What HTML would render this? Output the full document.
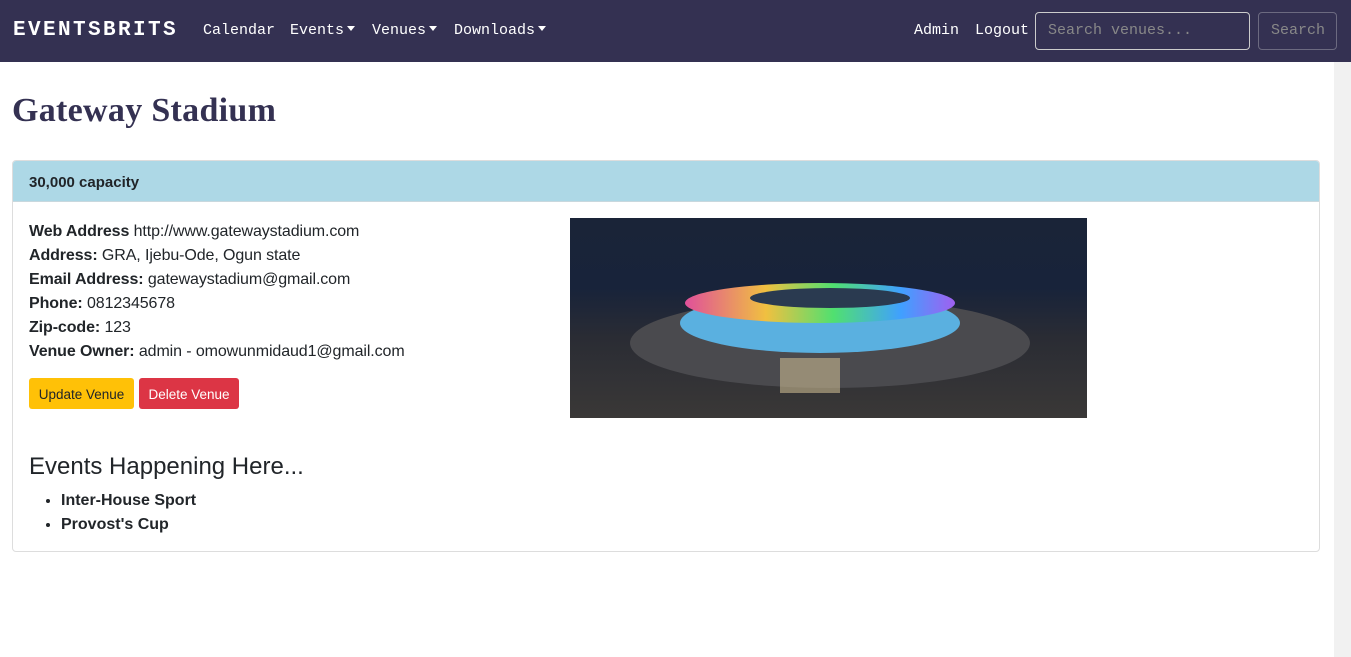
<!DOCTYPE html>
<html><head><style>
*{box-sizing:border-box;margin:0;padding:0}
body{width:1351px;height:657px;overflow:hidden;background:#fff;font-family:"Liberation Sans",sans-serif;color:#212529;position:relative}
nav{position:absolute;left:0;top:0;width:1351px;height:62px;background:#343152;color:#fff;font-family:"Liberation Mono",monospace}
.brand{position:absolute;left:13px;top:19px;font-size:21px;font-weight:bold;letter-spacing:2.4px}
.nl{position:absolute;top:22px;font-size:15px}
.car{display:inline-block;width:0;height:0;border-left:4.5px solid transparent;border-right:4.5px solid transparent;border-top:5px solid #fff;vertical-align:3px;margin-left:3px}
.inp{position:absolute;left:1035px;top:12px;width:215px;height:38px;border:1px solid #ccc;border-radius:4px;color:#888;font-size:15px;padding:9px 12px}
.btn{position:absolute;left:1258px;top:12px;width:79px;height:38px;border:1px solid #6c6a80;border-radius:4px;color:#888;font-size:15px;padding:9px 12px}
.sb{position:absolute;left:1334px;top:62px;width:17px;height:595px;background:#f1f1f1}
h1{position:absolute;left:12px;top:92px;font-family:"Liberation Serif",serif;font-size:34px;color:#343152;font-weight:bold;letter-spacing:0.3px}
.card{position:absolute;left:12px;top:160px;width:1308px;height:392px;border:1px solid #ddd;border-radius:4px;overflow:hidden}
.ch{height:41px;background:#add8e6;border-bottom:1px solid #c8d8de;font-weight:bold;font-size:15px;padding:13px 16px 0}
.info{position:absolute;left:16px;top:59px;font-size:16px;line-height:24px;letter-spacing:-0.1px}
.b{position:absolute;top:217px;height:31px;border-radius:3px;font-size:13.5px;padding:9px 9px 0;white-space:nowrap;text-align:center}
h3{position:absolute;left:16px;top:292px;font-size:24px;font-weight:normal}
ul{position:absolute;left:48px;top:328px;font-size:16px;font-weight:bold;line-height:24px}
.img{position:absolute;left:557px;top:57px;width:517px;height:200px;background:linear-gradient(#1a2438 0%,#18233a 35%,#2a2c34 60%,#3a3837 100%);overflow:hidden}
</style></head><body>
<nav>
<div class="brand">EVENTSBRITS</div>
<div class="nl" style="left:203px">Calendar</div>
<div class="nl" style="left:290px">Events<span class="car"></span></div>
<div class="nl" style="left:372px">Venues<span class="car"></span></div>
<div class="nl" style="left:454px">Downloads<span class="car"></span></div>
<div class="nl" style="left:914px">Admin</div>
<div class="nl" style="left:975px">Logout</div>
<div class="inp">Search venues...</div>
<div class="btn">Search</div>
</nav>
<div class="sb"></div>
<h1>Gateway Stadium</h1>
<div class="card">
<div class="ch">30,000 capacity</div>
<div class="info">
<b>Web Address</b> http://www.gatewaystadium.com<br>
<b>Address:</b> GRA, Ijebu-Ode, Ogun state<br>
<b>Email Address:</b> gatewaystadium@gmail.com<br>
<b>Phone:</b> 0812345678<br>
<b>Zip-code:</b> 123<br>
<b>Venue Owner:</b> admin - omowunmidaud1@gmail.com
</div>
<div class="b" style="left:16px;width:105px;background:#ffc107;color:#212529">Update Venue</div>
<div class="b" style="left:126px;width:100px;background:#dc3545;color:#fff">Delete Venue</div>
<div class="img">
<svg width="517" height="200">
<ellipse cx="260" cy="125" rx="200" ry="45" fill="#4a4a4e"/>
<ellipse cx="250" cy="105" rx="140" ry="30" fill="#5ab0e0"/>
<defs><linearGradient id="g" x1="0" x2="1"><stop offset="0" stop-color="#e0509a"/><stop offset=".3" stop-color="#f0c040"/><stop offset=".55" stop-color="#50e070"/><stop offset=".8" stop-color="#40a0ff"/><stop offset="1" stop-color="#a060f0"/></linearGradient></defs>
<ellipse cx="250" cy="85" rx="135" ry="20" fill="url(#g)"/>
<ellipse cx="260" cy="80" rx="80" ry="10" fill="#2a3a50"/>
<rect x="210" y="140" width="60" height="35" fill="#c8b890" opacity=".6"/>
</svg>
</div>
<h3>Events Happening Here...</h3>
<ul><li>Inter-House Sport</li><li>Provost's Cup</li></ul>
</div>
</body></html>
